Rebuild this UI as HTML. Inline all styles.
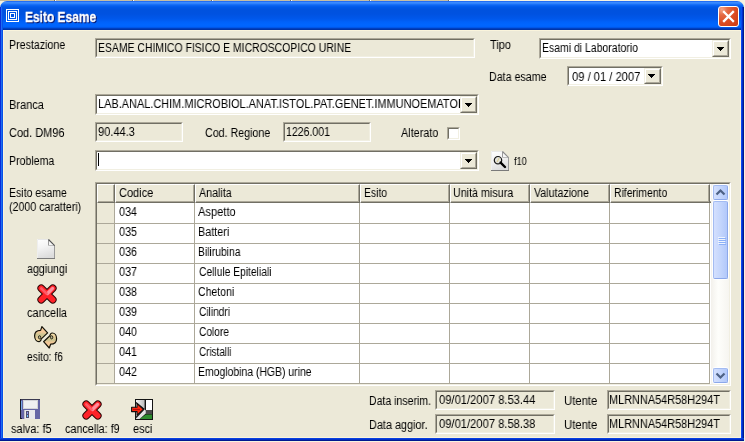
<!DOCTYPE html>
<html><head><meta charset="utf-8"><style>
html,body{margin:0;padding:0;width:745px;height:442px;overflow:hidden;background:#ECE9D8;position:relative}
*{box-sizing:border-box}
.a{position:absolute}
.t{position:absolute;font-family:"Liberation Sans",sans-serif;font-size:12px;line-height:14px;white-space:nowrap;color:#000;transform-origin:0 0;will-change:transform}
.sk{position:absolute;border-top:1px solid #ACA899;border-left:1px solid #ACA899;border-right:1px solid #fff;border-bottom:1px solid #fff;overflow:hidden}
.sk>.in{position:absolute;left:0;top:0;right:0;bottom:0;border-top:1px solid #716F64;border-left:1px solid #716F64;border-right:1px solid #F1EFE2;border-bottom:1px solid #F1EFE2}
.bt{position:absolute;background:#ECE9D8;border-top:1px solid #F1EFE2;border-left:1px solid #F1EFE2;border-right:1px solid #716F64;border-bottom:1px solid #716F64}
.bt>.in{position:absolute;left:0;top:0;right:0;bottom:0;border-top:1px solid #fff;border-left:1px solid #fff;border-right:1px solid #ACA899;border-bottom:1px solid #ACA899}
</style></head><body>
<div class="a" style="left:0;top:0;width:745px;height:442px;background:#F6F2E0"></div>
<div class="a" style="left:0;top:0;width:450px;height:1px;background:#C6BEA2"></div>
<div class="a" style="left:54px;top:0;width:1px;height:1px;background:#7A7460"></div><div class="a" style="left:55px;top:0;width:1px;height:1px;background:#FFFFFF"></div>
<div class="a" style="left:132px;top:0;width:1px;height:1px;background:#7A7460"></div><div class="a" style="left:133px;top:0;width:1px;height:1px;background:#FFFFFF"></div>
<div class="a" style="left:211px;top:0;width:1px;height:1px;background:#7A7460"></div><div class="a" style="left:212px;top:0;width:1px;height:1px;background:#FFFFFF"></div>
<div class="a" style="left:290px;top:0;width:1px;height:1px;background:#7A7460"></div><div class="a" style="left:291px;top:0;width:1px;height:1px;background:#FFFFFF"></div>
<div class="a" style="left:369px;top:0;width:1px;height:1px;background:#7A7460"></div><div class="a" style="left:370px;top:0;width:1px;height:1px;background:#FFFFFF"></div>
<div class="a" style="left:448px;top:0;width:1px;height:1px;background:#7A7460"></div><div class="a" style="left:449px;top:0;width:1px;height:1px;background:#FFFFFF"></div>
<div class="a" id="title" style="left:0;top:1px;width:744px;height:29px;border-radius:7px 7px 0 0;background:linear-gradient(#0A50E8 0px,#3A8AFF 1px,#3A8CFF 2px,#2478FA 3px,#0E68F4 4px,#0058E8 6px,#0052DE 9px,#0052E0 13px,#0058EC 18px,#0062FA 21px,#0066FF 24px,#0062FA 26px,#004CD8 27px,#0034A8 28px)"></div>
<div class="a" style="left:0;top:7px;width:3px;height:434px;background:linear-gradient(90deg,#0A2AD8 0,#0A2AD8 1px,#1E6EF0 1px,#1E6EF0 2px,#0850E8 2px)"></div>
<div class="a" style="left:741px;top:7px;width:3px;height:434px;background:linear-gradient(90deg,#0A4AF0 0,#0A4AF0 1px,#0030C8 1px,#0030C8 2px,#001A90 2px)"></div>
<div class="a" style="left:0;top:438px;width:744px;height:3px;background:linear-gradient(#0A40E0 0,#0A40E0 1px,#0030C8 1px,#0030C8 2px,#001890 2px)"></div>
<div class="a" style="left:3px;top:30px;width:738px;height:408px;background:#ECE9D8;border:1px solid #FAF4DC"></div>
<svg class="a" style="left:6px;top:9px" width="13" height="13" shape-rendering="crispEdges"><rect x="0.5" y="0.5" width="12" height="12" fill="none" stroke="#fff"/><rect x="2.5" y="2.5" width="8" height="8" fill="none" stroke="#fff"/><rect x="4.5" y="4.5" width="4" height="4" fill="none" stroke="#fff"/></svg>
<div class="a" style="left:26px;top:9px;font:bold 14px/18px 'Liberation Sans',sans-serif;color:#0A186E;transform-origin:0 0;transform:scaleX(0.854);will-change:transform;white-space:nowrap;-webkit-text-stroke:0.3px #0A186E">Esito Esame</div>
<div class="a" style="left:25px;top:8px;font:bold 14px/18px 'Liberation Sans',sans-serif;color:#fff;transform-origin:0 0;transform:scaleX(0.854);will-change:transform;white-space:nowrap;-webkit-text-stroke:0.3px #fff">Esito Esame</div>
<div class="a" style="left:718px;top:6px;width:21px;height:21px;border:1px solid #fff;border-radius:3px;background:radial-gradient(circle at 15% 12%,#F4A488 0,#E46A44 25%,#DC4E24 55%,#CC3A10 100%)"></div>
<svg class="a" style="left:718px;top:6px" width="21" height="21"><path d="M6 6L15 15M15 6L6 15" stroke="#fff" stroke-width="2.3" stroke-linecap="square"/></svg>
<div class="sk" style="left:95px;top:38px;width:380px;height:20px;background:#ECE9D8"><div class="in"></div></div>
<div class="sk" style="left:539px;top:38px;width:192px;height:21px;background:#fff"><div class="in"></div></div><div class="bt" style="left:712px;top:40px;width:17px;height:17px"><div class="in"></div></div><svg class="a" style="left:717px;top:47px" width="7" height="4"><path d="M0 0h7v1h-1v1h-1v1h-1v1h-1v-1h-1v-1h-1v-1h-1z" fill="#000"/></svg>
<div class="sk" style="left:567px;top:66px;width:96px;height:20px;background:#fff"><div class="in"></div></div><div class="bt" style="left:644px;top:68px;width:17px;height:16px"><div class="in"></div></div><svg class="a" style="left:648px;top:74px" width="7" height="4"><path d="M0 0h7v1h-1v1h-1v1h-1v1h-1v-1h-1v-1h-1v-1h-1z" fill="#000"/></svg>
<div class="sk" style="left:95px;top:94px;width:384px;height:21px;background:#fff"><div class="in"></div></div><div class="bt" style="left:460px;top:96px;width:17px;height:17px"><div class="in"></div></div><svg class="a" style="left:465px;top:103px" width="7" height="4"><path d="M0 0h7v1h-1v1h-1v1h-1v1h-1v-1h-1v-1h-1v-1h-1z" fill="#000"/></svg>
<div class="sk" style="left:95px;top:122px;width:88px;height:20px;background:#ECE9D8"><div class="in"></div></div>
<div class="sk" style="left:283px;top:122px;width:88px;height:20px;background:#ECE9D8"><div class="in"></div></div>
<div class="sk" style="left:447px;top:127px;width:13px;height:13px;background:#fff"><div class="in"></div></div>
<div class="sk" style="left:95px;top:150px;width:384px;height:21px;background:#fff"><div class="in"></div></div><div class="bt" style="left:460px;top:152px;width:17px;height:17px"><div class="in"></div></div><svg class="a" style="left:465px;top:159px" width="7" height="4"><path d="M0 0h7v1h-1v1h-1v1h-1v1h-1v-1h-1v-1h-1v-1h-1z" fill="#000"/></svg>
<div class="a" style="left:98px;top:153px;width:1px;height:13px;background:#000"></div>
<div class="sk" style="left:435px;top:390px;width:120px;height:20px;background:#ECE9D8"><div class="in"></div></div>
<div class="sk" style="left:607px;top:390px;width:124px;height:20px;background:#ECE9D8"><div class="in"></div></div>
<div class="sk" style="left:435px;top:414px;width:120px;height:20px;background:#ECE9D8"><div class="in"></div></div>
<div class="sk" style="left:607px;top:414px;width:124px;height:20px;background:#ECE9D8"><div class="in"></div></div>
<div class="sk" style="left:95px;top:182px;width:636px;height:204px;background:#fff"><div class="in"></div></div>
<div class="a" style="left:97px;top:184px;width:17px;height:200px;background:#ECE9D8"></div>
<div class="a" style="left:97px;top:184px;width:613px;height:19px;background:#ECE9D8"></div>
<div class="a" style="left:97px;top:184px;width:18px;height:19px;border-left:1px solid #fff;border-top:1px solid #fff;border-right:1px solid #716F64;border-bottom:1px solid #716F64;box-sizing:border-box"><div class="a" style="left:0;top:0;right:0;bottom:0;border-right:1px solid #ACA899;border-bottom:1px solid #ACA899"></div></div>
<div class="a" style="left:115px;top:184px;width:80px;height:19px;border-left:1px solid #fff;border-top:1px solid #fff;border-right:1px solid #716F64;border-bottom:1px solid #716F64;box-sizing:border-box"><div class="a" style="left:0;top:0;right:0;bottom:0;border-right:1px solid #ACA899;border-bottom:1px solid #ACA899"></div></div>
<div class="a" style="left:195px;top:184px;width:165px;height:19px;border-left:1px solid #fff;border-top:1px solid #fff;border-right:1px solid #716F64;border-bottom:1px solid #716F64;box-sizing:border-box"><div class="a" style="left:0;top:0;right:0;bottom:0;border-right:1px solid #ACA899;border-bottom:1px solid #ACA899"></div></div>
<div class="a" style="left:360px;top:184px;width:90px;height:19px;border-left:1px solid #fff;border-top:1px solid #fff;border-right:1px solid #716F64;border-bottom:1px solid #716F64;box-sizing:border-box"><div class="a" style="left:0;top:0;right:0;bottom:0;border-right:1px solid #ACA899;border-bottom:1px solid #ACA899"></div></div>
<div class="a" style="left:450px;top:184px;width:80px;height:19px;border-left:1px solid #fff;border-top:1px solid #fff;border-right:1px solid #716F64;border-bottom:1px solid #716F64;box-sizing:border-box"><div class="a" style="left:0;top:0;right:0;bottom:0;border-right:1px solid #ACA899;border-bottom:1px solid #ACA899"></div></div>
<div class="a" style="left:530px;top:184px;width:80px;height:19px;border-left:1px solid #fff;border-top:1px solid #fff;border-right:1px solid #716F64;border-bottom:1px solid #716F64;box-sizing:border-box"><div class="a" style="left:0;top:0;right:0;bottom:0;border-right:1px solid #ACA899;border-bottom:1px solid #ACA899"></div></div>
<div class="a" style="left:610px;top:184px;width:100px;height:19px;border-left:1px solid #fff;border-top:1px solid #fff;border-right:1px solid #716F64;border-bottom:1px solid #716F64;box-sizing:border-box"><div class="a" style="left:0;top:0;right:0;bottom:0;border-right:1px solid #ACA899;border-bottom:1px solid #ACA899"></div></div>
<div class="a" style="left:97px;top:223px;width:613px;height:1px;background:#ACA899"></div>
<div class="a" style="left:97px;top:243px;width:613px;height:1px;background:#ACA899"></div>
<div class="a" style="left:97px;top:263px;width:613px;height:1px;background:#ACA899"></div>
<div class="a" style="left:97px;top:283px;width:613px;height:1px;background:#ACA899"></div>
<div class="a" style="left:97px;top:303px;width:613px;height:1px;background:#ACA899"></div>
<div class="a" style="left:97px;top:323px;width:613px;height:1px;background:#ACA899"></div>
<div class="a" style="left:97px;top:343px;width:613px;height:1px;background:#ACA899"></div>
<div class="a" style="left:97px;top:363px;width:613px;height:1px;background:#ACA899"></div>
<div class="a" style="left:97px;top:383px;width:613px;height:1px;background:#ACA899"></div>
<div class="a" style="left:114px;top:203px;width:1px;height:181px;background:#ACA899"></div>
<div class="a" style="left:194px;top:203px;width:1px;height:181px;background:#ACA899"></div>
<div class="a" style="left:359px;top:203px;width:1px;height:181px;background:#ACA899"></div>
<div class="a" style="left:449px;top:203px;width:1px;height:181px;background:#ACA899"></div>
<div class="a" style="left:529px;top:203px;width:1px;height:181px;background:#ACA899"></div>
<div class="a" style="left:609px;top:203px;width:1px;height:181px;background:#ACA899"></div>
<div class="a" style="left:709px;top:203px;width:1px;height:181px;background:#ACA899"></div>
<div class="a" style="left:710px;top:201px;width:2px;height:1px;background:#ACA899"></div><div class="a" style="left:710px;top:202px;width:2px;height:1px;background:#716F64"></div>
<div class="a" style="left:711px;top:184px;width:18px;height:200px;background:linear-gradient(90deg,#F3F1EC,#FEFEFB 40%,#F6F5F0)"></div>
<div class="a" style="left:712px;top:184px;width:17px;height:17px;border:1px solid #fff;border-radius:3px;"><div class="a" style="left:0;top:0;right:0;bottom:0;border-radius:2px;background:linear-gradient(90deg,#D4E0FE,#C2D4FC 55%,#B2C8FA);border:1px solid #A4BCF2;border-right-color:#8CA8EA;border-bottom-color:#8CA8EA"></div><svg class="a" style="left:2px;top:3px" width="11" height="9"><path d="M1.5 6.5L5.5 2.5L9.5 6.5" fill="none" stroke="#4D6185" stroke-width="2.2"/></svg></div>
<div class="a" style="left:712px;top:200px;width:17px;height:80px;border:1px solid #fff;border-radius:3px;"><div class="a" style="left:0;top:0;right:0;bottom:0;border-radius:2px;background:linear-gradient(90deg,#D4E0FE,#C2D4FC 55%,#B2C8FA);border:1px solid #A4BCF2;border-right-color:#8CA8EA;border-bottom-color:#8CA8EA"></div><svg class="a" style="left:5px;top:36px" width="9" height="8" shape-rendering="crispEdges"><path d="M0 0.5h7M0 2.5h7M0 4.5h7M0 6.5h7" stroke="#EEF4FE"/><path d="M1 1.5h7M1 3.5h7M1 5.5h7M1 7.5h7" stroke="#8CB0F8"/></svg></div>
<div class="a" style="left:712px;top:367px;width:17px;height:17px;border:1px solid #fff;border-radius:3px;"><div class="a" style="left:0;top:0;right:0;bottom:0;border-radius:2px;background:linear-gradient(90deg,#D4E0FE,#C2D4FC 55%,#B2C8FA);border:1px solid #A4BCF2;border-right-color:#8CA8EA;border-bottom-color:#8CA8EA"></div><svg class="a" style="left:2px;top:3px" width="11" height="9"><path d="M1.5 2.5L5.5 6.5L9.5 2.5" fill="none" stroke="#4D6185" stroke-width="2.2"/></svg></div>
<svg class="a" style="left:491px;top:151px" width="18" height="20"><defs><linearGradient id="pg491" x1="0" y1="0" x2="0.3" y2="1"><stop offset="0" stop-color="#FFFFFF"/><stop offset="0.45" stop-color="#F4F4F4"/><stop offset="1" stop-color="#DCDCDC"/></linearGradient></defs><path d="M0 0H11.5L18 6.5V20H0Z" fill="url(#pg491)"/><path d="M0.5 0.5H11" stroke="#E8E8E8" fill="none"/><path d="M0.5 0.5V19" stroke="#EEEEEE" fill="none"/><path d="M17.5 6.5V19.5" stroke="#9A9A9A" fill="none"/><path d="M0 19.5H18" stroke="#7A7A7A" fill="none"/><path d="M11.5 0.5V6.5H17.5Z" fill="#F6F6F6"/><path d="M11.5 0.5V6.5" stroke="#9C9C9C" fill="none"/><path d="M11.5 6.5H17.5" stroke="#BDBDBD" fill="none"/><path d="M11.5 0.5L17.7 6.7" stroke="#8A8A8A" stroke-width="1.1" fill="none"/></svg>
<svg class="a" style="left:491px;top:151px" width="18" height="20"><circle cx="7" cy="9.2" r="3.7" fill="#E2E2DC" stroke="#141414" stroke-width="1.2"/><path d="M8.2 7L6 11" stroke="#D8C880" stroke-width="0.9"/><path d="M9.6 11.6L14 16" stroke="#000" stroke-width="2.4" stroke-linecap="round"/></svg>
<svg class="a" style="left:37px;top:239px" width="18" height="20"><defs><linearGradient id="pg37" x1="0" y1="0" x2="0.3" y2="1"><stop offset="0" stop-color="#FFFFFF"/><stop offset="0.45" stop-color="#F4F4F4"/><stop offset="1" stop-color="#DCDCDC"/></linearGradient></defs><path d="M0 0H11.5L18 6.5V20H0Z" fill="url(#pg37)"/><path d="M0.5 0.5H11" stroke="#E8E8E8" fill="none"/><path d="M0.5 0.5V19" stroke="#EEEEEE" fill="none"/><path d="M17.5 6.5V19.5" stroke="#9A9A9A" fill="none"/><path d="M0 19.5H18" stroke="#7A7A7A" fill="none"/><path d="M11.5 0.5V6.5H17.5Z" fill="#F6F6F6"/><path d="M11.5 0.5V6.5" stroke="#9C9C9C" fill="none"/><path d="M11.5 6.5H17.5" stroke="#BDBDBD" fill="none"/><path d="M11.5 0.5L17.7 6.7" stroke="#505050" stroke-width="1.1" fill="none"/></svg>
<svg class="a" style="left:37px;top:284px" width="20" height="20" viewBox="0 0 20 20"><path d="M4.2 4.2L15.8 15.8M15.8 4.2L4.2 15.8" stroke="#2A0404" stroke-width="7.6" stroke-linecap="round"/><path d="M4.2 4.2L15.8 15.8M15.8 4.2L4.2 15.8" stroke="#FF2228" stroke-width="5.6" stroke-linecap="round"/><path d="M10.5 9.5L15.6 4.4" stroke="#FF8E9C" stroke-width="3.2" stroke-linecap="round"/><path d="M4.3 4.3L9.5 9.5" stroke="#FF5A66" stroke-width="2.6" stroke-linecap="round"/></svg>
<svg class="a" style="left:82px;top:400px" width="20" height="20" viewBox="0 0 20 20"><path d="M4.2 4.2L15.8 15.8M15.8 4.2L4.2 15.8" stroke="#2A0404" stroke-width="7.6" stroke-linecap="round"/><path d="M4.2 4.2L15.8 15.8M15.8 4.2L4.2 15.8" stroke="#FF2228" stroke-width="5.6" stroke-linecap="round"/><path d="M10.5 9.5L15.6 4.4" stroke="#FF8E9C" stroke-width="3.2" stroke-linecap="round"/><path d="M4.3 4.3L9.5 9.5" stroke="#FF5A66" stroke-width="2.6" stroke-linecap="round"/></svg>
<svg class="a" style="left:34px;top:326px" width="24" height="23" viewBox="0 0 24 23"><defs><linearGradient id="ag" x1="0" y1="0" x2="0" y2="1"><stop offset="0" stop-color="#F8D0A0"/><stop offset="0.35" stop-color="#F4C898"/><stop offset="0.55" stop-color="#C8C490"/><stop offset="0.75" stop-color="#E8CC98"/><stop offset="1" stop-color="#F4E4B0"/></linearGradient></defs><g><path d="M7.9 0.6L13.6 6.9L7.3 12.9C6.9 14.6 6.1 15.6 5 15.6C2.4 15.6 0.6 13 0.6 9.8C0.6 6.5 2.6 4.4 6.6 4.4Z" fill="url(#ag)" stroke="#141208" stroke-width="1.2" stroke-linejoin="round"/><ellipse cx="5.6" cy="11.3" rx="1.2" ry="1.6" fill="#B8B490" stroke="#1A1A10" stroke-width="0.9"/></g><g transform="rotate(180 11.6 11.3)"><path d="M7.9 0.6L13.6 6.9L7.3 12.9C6.9 14.6 6.1 15.6 5 15.6C2.4 15.6 0.6 13 0.6 9.8C0.6 6.5 2.6 4.4 6.6 4.4Z" fill="url(#ag)" stroke="#141208" stroke-width="1.2" stroke-linejoin="round"/><ellipse cx="5.6" cy="11.3" rx="1.2" ry="1.6" fill="#B8B490" stroke="#1A1A10" stroke-width="0.9"/></g></svg>
<svg class="a" style="left:20px;top:399px" width="20" height="20" shape-rendering="crispEdges"><rect x="0" y="0" width="20" height="20" fill="#6666A6"/><rect x="0" y="0" width="20" height="1" fill="#3A3A50"/><rect x="0" y="0" width="1" height="20" fill="#1A1A28"/><rect x="1" y="2" width="1" height="9" fill="#78A8E8"/><rect x="3" y="1" width="15" height="9" fill="#D4D4D8"/><rect x="4" y="2" width="13" height="7" fill="#F0F0F2"/><rect x="4" y="11" width="11" height="9" fill="#E8E8EC"/><rect x="4" y="11" width="1" height="9" fill="#C4C4C8"/><rect x="6" y="12" width="3" height="7" fill="#505070"/><rect x="7" y="13" width="1" height="2" fill="#8C90E8"/><rect x="7" y="16" width="1" height="2" fill="#70C0FF"/><rect x="1" y="19" width="1" height="1" fill="#1A1A28"/></svg>
<svg class="a" style="left:131px;top:399px" width="22" height="21"><defs><linearGradient id="dg" x1="0" y1="0" x2="1" y2="0"><stop offset="0" stop-color="#F4F4F4"/><stop offset="1" stop-color="#BEBEBE"/></linearGradient></defs><rect x="4" y="0" width="18" height="21" fill="#141414"/><rect x="15" y="1" width="6" height="10" fill="#FFFFFF"/><rect x="15" y="11" width="6" height="4" fill="#4A4A4A"/><path d="M8.5 20L15 15.5H21V20Z" fill="#2E8C2E"/><path d="M5 1H13.6V10.2L5 19.5Z" fill="url(#dg)"/><path d="M5 19.5L13.6 10.2L14.8 11.5V14.5L8.5 20H5Z" fill="#E4E4E4"/><path d="M5 3.5L13 10L5 18.5" fill="none" stroke="#101010" stroke-width="1.1"/><path d="M0.6 8.2H6V4.6L12.4 10.4L6 16.2V12.6H0.6Z" fill="#FF2A10" stroke="#101010" stroke-width="1.1" stroke-linejoin="round"/><path d="M2 10.5H9" stroke="#C00808" stroke-width="1.2"/></svg>
<div class="t" style="left:9.11px;top:38px;transform:scaleX(0.8871)">Prestazione</div>
<div class="t" style="left:98.13px;top:41px;transform:scaleX(0.8690)">ESAME CHIMICO FISICO E MICROSCOPICO URINE</div>
<div class="t" style="left:490.00px;top:38px;transform:scaleX(0.9130)">Tipo</div>
<div class="t" style="left:542.13px;top:41px;transform:scaleX(0.8716)">Esami di Laboratorio</div>
<div class="t" style="left:489.11px;top:70px;transform:scaleX(0.8889)">Data esame</div>
<div class="t" style="left:572.00px;top:70px;transform:scaleX(0.9315)">09 / 01 / 2007</div>
<div class="t" style="left:9.08px;top:98px;transform:scaleX(0.9189)">Branca</div>
<div class="t" style="left:98.09px;top:97px;transform:scaleX(0.9116)">LAB.ANAL.CHIM.MICROBIOL.ANAT.ISTOL.PAT.GENET.IMMUNOEMATOI</div>
<div class="t" style="left:9.08px;top:126px;transform:scaleX(0.9153)">Cod. DM96</div>
<div class="t" style="left:98.08px;top:125px;transform:scaleX(0.9231)">90.44.3</div>
<div class="t" style="left:205.11px;top:126px;transform:scaleX(0.8889)">Cod. Regione</div>
<div class="t" style="left:286.12px;top:125px;transform:scaleX(0.8776)">1226.001</div>
<div class="t" style="left:401.00px;top:126px;transform:scaleX(0.9024)">Alterato</div>
<div class="t" style="left:9.12px;top:154px;transform:scaleX(0.8800)">Problema</div>
<div class="t" style="left:514.00px;top:155px;transform:scaleX(0.9286);font-size:10px">f10</div>
<div class="t" style="left:9.12px;top:186px;transform:scaleX(0.8769)">Esito esame</div>
<div class="t" style="left:9.11px;top:200px;transform:scaleX(0.8875)">(2000 caratteri)</div>
<div class="t" style="left:27.09px;top:262px;transform:scaleX(0.8869)">aggiungi</div>
<div class="t" style="left:27.00px;top:306px;transform:scaleX(0.9091)">cancella</div>
<div class="t" style="left:27.00px;top:350px;transform:scaleX(0.8571)">esito: f6</div>
<div class="t" style="left:11.07px;top:422px;transform:scaleX(0.9075)">salva: f5</div>
<div class="t" style="left:65.00px;top:422px;transform:scaleX(0.9000)">cancella: f9</div>
<div class="t" style="left:133.00px;top:422px;transform:scaleX(0.9048)">esci</div>
<div class="t" style="left:369.13px;top:394px;transform:scaleX(0.8772)">Data inserim.</div>
<div class="t" style="left:438.92px;top:393px;transform:scaleX(0.9328)">09/01/2007 8.53.44</div>
<div class="t" style="left:564.06px;top:394px;transform:scaleX(0.9412)">Utente</div>
<div class="t" style="left:609.09px;top:393px;transform:scaleX(0.9091)">MLRNNA54R58H294T</div>
<div class="t" style="left:369.10px;top:418px;transform:scaleX(0.9048)">Data aggior.</div>
<div class="t" style="left:439.00px;top:417px;transform:scaleX(0.9320)">09/01/2007 8.58.38</div>
<div class="t" style="left:564.06px;top:418px;transform:scaleX(0.9412)">Utente</div>
<div class="t" style="left:609.09px;top:417px;transform:scaleX(0.9091)">MLRNNA54R58H294T</div>
<div class="t" style="left:119.09px;top:186px;transform:scaleX(0.9166)">Codice</div>
<div class="t" style="left:199.00px;top:186px;transform:scaleX(0.8919)">Analita</div>
<div class="t" style="left:364.14px;top:186px;transform:scaleX(0.8632)">Esito</div>
<div class="t" style="left:453.11px;top:186px;transform:scaleX(0.8939)">Unità misura</div>
<div class="t" style="left:534.00px;top:186px;transform:scaleX(0.8871)">Valutazione</div>
<div class="t" style="left:614.13px;top:186px;transform:scaleX(0.8690)">Riferimento</div>
<div class="t" style="left:119.00px;top:205px;transform:scaleX(0.9000)">034</div>
<div class="t" style="left:198.00px;top:205px;transform:scaleX(0.9250)">Aspetto</div>
<div class="t" style="left:119.00px;top:225px;transform:scaleX(0.9024)">035</div>
<div class="t" style="left:198.10px;top:225px;transform:scaleX(0.9024)">Batteri</div>
<div class="t" style="left:119.00px;top:245px;transform:scaleX(0.9024)">036</div>
<div class="t" style="left:198.14px;top:245px;transform:scaleX(0.8614)">Bilirubina</div>
<div class="t" style="left:119.00px;top:265px;transform:scaleX(0.9024)">037</div>
<div class="t" style="left:199.13px;top:265px;transform:scaleX(0.8556)">Cellule Epiteliali</div>
<div class="t" style="left:119.00px;top:285px;transform:scaleX(0.9024)">038</div>
<div class="t" style="left:198.12px;top:285px;transform:scaleX(0.8773)">Chetoni</div>
<div class="t" style="left:119.00px;top:305px;transform:scaleX(0.9024)">039</div>
<div class="t" style="left:199.16px;top:305px;transform:scaleX(0.8460)">Cilindri</div>
<div class="t" style="left:119.00px;top:325px;transform:scaleX(0.9024)">040</div>
<div class="t" style="left:199.13px;top:325px;transform:scaleX(0.8451)">Colore</div>
<div class="t" style="left:119.00px;top:345px;transform:scaleX(0.9024)">041</div>
<div class="t" style="left:199.15px;top:345px;transform:scaleX(0.8236)">Cristalli</div>
<div class="t" style="left:119.00px;top:365px;transform:scaleX(0.9024)">042</div>
<div class="t" style="left:198.13px;top:365px;transform:scaleX(0.8682)">Emoglobina (HGB) urine</div>
</body></html>
